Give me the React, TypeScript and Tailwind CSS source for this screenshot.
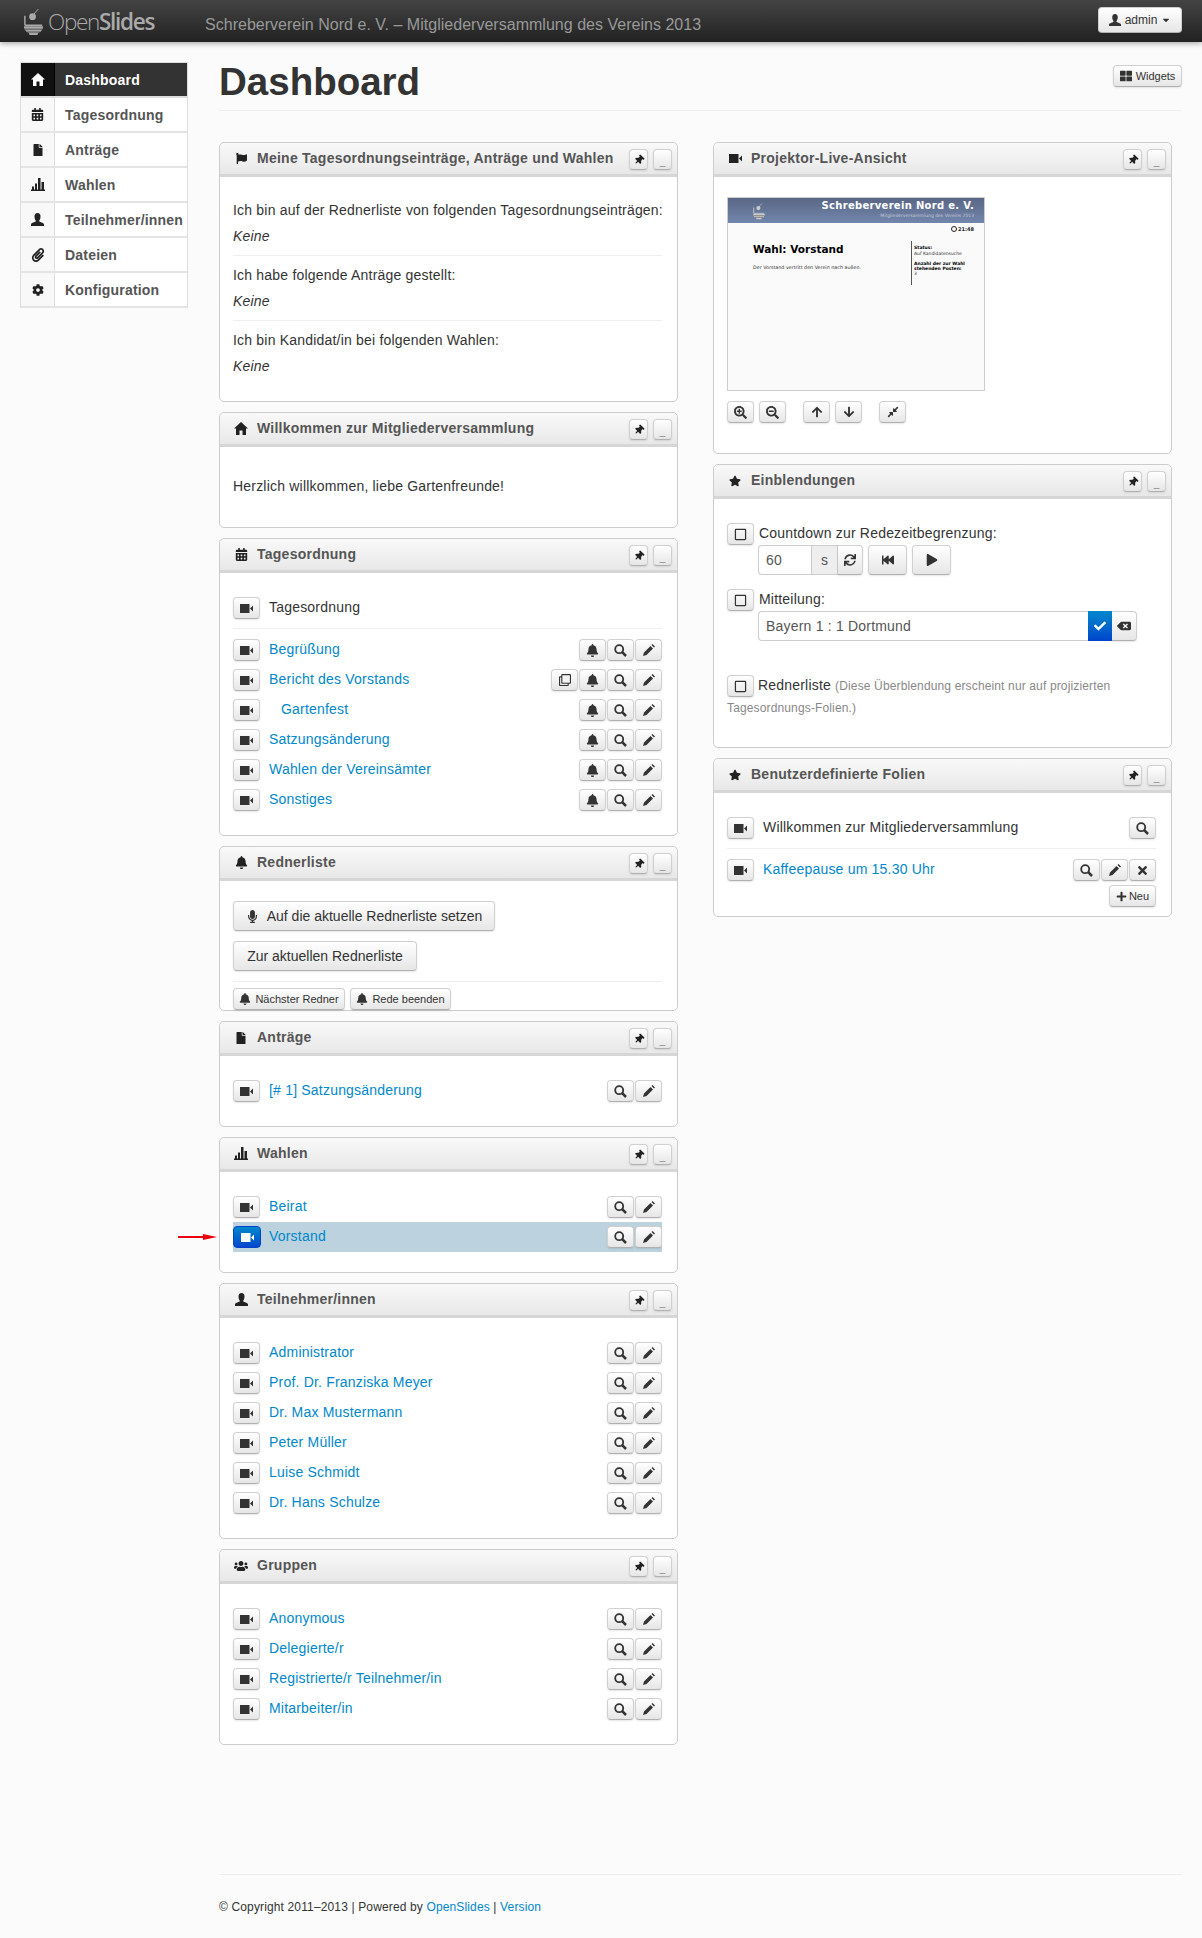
import type { ReactNode } from 'react'
import {
  FaArrowDown,
  FaArrowUp,
  FaBackspace,
  FaBell,
  FaCalendarAlt,
  FaCaretDown,
  FaCheck,
  FaCog,
  FaCompressAlt,
  FaFastBackward,
  FaFile,
  FaFlag,
  FaMicrophone,
  FaPaperclip,
  FaPlay,
  FaPlus,
  FaRegClone,
  FaRegSquare,
  FaSearchMinus,
  FaSearchPlus,
  FaStar,
  FaSync,
  FaThLarge,
  FaThumbtack,
  FaTimes,
  FaUsers,
} from 'react-icons/fa'

const btn =
  'inline-flex items-center justify-center rounded-[4px] border border-[#d0d0d0] border-b-[#b0b0b0] bg-linear-to-b from-white to-[#e6e6e6] text-[#333] tracking-[0px] shadow-[0_1px_2px_rgba(0,0,0,0.1)]'

function CamIcon({ className = 'text-[#333]' }: { className?: string }) {
  return (
    <svg viewBox="0 0 13 9" className={`h-[9px] w-[13px] ${className}`} fill="currentColor">
      <path d="M0 0h9.500v9H0zM10 4.500 13 1.500v6z" />
    </svg>
  )
}

function HomeIcon() {
  return (
    <svg viewBox="0 0 14 13" className="h-[13px] w-[14px]" fill="currentColor">
      <path d="M7 0 14 6.500h-2V13H8.500V8.500h-3V13H2V6.500H0Z" />
    </svg>
  )
}

function StatsIcon() {
  return (
    <svg viewBox="0 0 14 13" className="h-[13px] w-[14px]" fill="currentColor">
      <path d="M0 11.500h14V13H0zM1 8.500h2v3H1zM4 5.500h2v6H4zM7 0h2.500v11.500H7zM10.500 4h2.500v7.500h-2.500z" />
    </svg>
  )
}

function UserIcon({ size = 13 }: { size?: number }) {
  return (
    <svg viewBox="0 0 13 13" width={size} height={size} fill="currentColor">
      <path d="M6.500 0c2 0 3 1.500 3 3.500S8.700 7 8 8c0 1 5 1.500 5 3.500V13H0v-1.500C0 9.500 5 9 5 8c-.7-1-1.500-2.500-1.500-4.500S4.500 0 6.500 0Z" />
    </svg>
  )
}

function PencilIcon() {
  return (
    <svg viewBox="0 0 12 12" className="h-[12px] w-[12px]" fill="currentColor">
      <path d="M9.500 0 12 2.500l-1 1L8.500 1zM7.500 2 10 4.500 3.500 11 0 12l1-3.500z" />
    </svg>
  )
}

function SearchIcon() {
  return (
    <svg viewBox="0 0 13 13" className="h-[13px] w-[13px]" fill="none" stroke="currentColor">
      <circle cx="5.200" cy="5.200" r="4" strokeWidth="1.800" />
      <path d="M8.200 8.200 12 12" strokeWidth="2.500" />
    </svg>
  )
}

function IconBtn({ children }: { children: ReactNode }) {
  return <span className={`${btn} h-[22px] w-[27px] shrink-0`}>{children}</span>
}

function Logo({ className }: { className: string }) {
  return (
    <svg viewBox="0 0 24 30" className={className}>
      <path d="M11 9 17 2" stroke="currentColor" strokeWidth="1" fill="none" />
      <circle cx="11" cy="10" r="3.500" fill="currentColor" />
      <path d="M3 9v10M3 19h18" stroke="currentColor" strokeWidth="1.500" fill="none" />
      <path d="M2 20h20c0 3-2 6-5 7l-1 2H8l-1-2c-3-1-5-4-5-7Z" fill="currentColor" />
      <path d="M3 23h18M5 26h14" stroke="#333" strokeWidth="0.8" />
    </svg>
  )
}

function Widget({
  title,
  icon,
  children,
  bodyClass = 'pl-[13px] pr-[15px] py-[20px]',
}: {
  title: string
  icon: ReactNode
  children: ReactNode
  bodyClass?: string
}) {
  return (
    <section className="mb-[10px] rounded-[5px] border border-[#ccc] bg-white">
      <div className="flex h-[34px] items-center rounded-t-[5px] border-b-[3px] border-[#d6d6d6] bg-linear-to-b from-[#f9f9f9] to-[#e8e8e8] pl-[13px] pr-[5px]">
        <span className="flex w-[24px] justify-center pr-[8px] text-[#222]">{icon}</span>
        <h3 className="flex-1 pb-[1px] text-[14px] font-bold tracking-[0.25px] text-[#555]">{title}</h3>
        <span className={`${btn} mt-[2px] h-[21px] w-[19px]`}>
          <FaThumbtack size={10} className="rotate-45 text-[#222]" />
        </span>
        <span className={`${btn} ml-[5px] mt-[2px] h-[21px] w-[19px] items-end pb-[2px] text-[10px] leading-none text-[#888]`}>_</span>
      </div>
      <div className={bodyClass}>{children}</div>
    </section>
  )
}

const search = <SearchIcon />
const pencil = <PencilIcon />
const bell = <FaBell size={13} />

function Row({
  label,
  link = true,
  indent,
  actions,
  active,
}: {
  label: string
  link?: boolean
  indent?: boolean
  actions?: ReactNode[]
  active?: boolean
}) {
  return (
    <div className={`relative flex h-[30px] items-center ${active ? 'bg-[#bcd2de]' : ''}`}>
      {active ? (
        <span className="inline-flex h-[22px] w-[28px] items-center justify-center rounded-[4px] border border-[#0044cc] bg-linear-to-b from-[#0088cc] to-[#0044cc]">
          <CamIcon className="text-white" />
        </span>
      ) : (
        <IconBtn>
          <CamIcon />
        </IconBtn>
      )}
      <span
        className={`flex-1 pb-[2px] ${active ? 'pl-[8px]' : 'pl-[9px]'} ${indent ? 'ml-[12px]' : ''} ${
          link ? 'text-[#0088cc]' : 'text-[#333]'
        }`}
      >
        {label}
      </span>
      <span className="flex gap-[1px]">
        {actions?.map((a, i) => (
          <IconBtn key={i}>{a}</IconBtn>
        ))}
      </span>
      {active && (
        <svg viewBox="0 0 39 6" className="absolute left-[-55px] top-[12px] h-[6px] w-[39px]">
          <path d="M0 2h25V0l14 3-14 3V4H0Z" fill="#e8000d" />
        </svg>
      )}
    </div>
  )
}

function Overlay({ children }: { children: ReactNode }) {
  return (
    <div className="flex gap-[4px]">
      <IconBtn>
        <FaRegSquare size={13} />
      </IconBtn>
      <div className="flex-1">{children}</div>
    </div>
  )
}

const navItems = [
  { label: 'Dashboard', icon: <HomeIcon />, active: true },
  { label: 'Tagesordnung', icon: <FaCalendarAlt size={13} /> },
  { label: 'Anträge', icon: <FaFile size={12} /> },
  { label: 'Wahlen', icon: <StatsIcon /> },
  { label: 'Teilnehmer/innen', icon: <UserIcon /> },
  { label: 'Dateien', icon: <FaPaperclip size={14} /> },
  { label: 'Konfiguration', icon: <FaCog size={12} /> },
]

const agenda = ['Bericht des Vorstands', 'Gartenfest', 'Satzungsänderung', 'Wahlen der Vereinsämter', 'Sonstiges']
const people = ['Administrator', 'Prof. Dr. Franziska Meyer', 'Dr. Max Mustermann', 'Peter Müller', 'Luise Schmidt', 'Dr. Hans Schulze']
const groups = ['Anonymous', 'Delegierte/r', 'Registrierte/r Teilnehmer/in', 'Mitarbeiter/in']

function Projector() {
  return (
    <div className="h-[194px] w-[258px] overflow-hidden border border-[#ccc] bg-[#fafafa] tracking-[0px] [font-family:'DejaVu_Sans',sans-serif]">
      <div className="flex h-[25px] justify-between bg-linear-to-b from-[#5a6786] to-[#7286ac] pl-[24px] pr-[10px]">
        <Logo className="mt-[3px] h-[20px] w-[14px] text-[#ccc]" />
        <div className="text-right">
          <div className="text-[10px] font-bold leading-[15px] tracking-[0.3px] text-white">Schreberverein Nord e. V.</div>
          <div className="text-[4.500px] leading-[5px] text-[#c4cad8]">Mitgliederversammlung des Vereins 2013</div>
        </div>
      </div>
      <div className="flex items-center justify-end pr-[10px] pt-[2px] text-[5px] font-bold leading-[8px] text-[#222]">
        <span className="mr-[1px] inline-block h-[6px] w-[6px] rounded-full border border-[#222]" />
        21:48
      </div>
      <div className="flex pl-[25px] pr-[10px] pt-[8px]">
        <div className="w-[158px]">
          <div className="text-[10.500px] font-bold leading-[16px] text-black">Wahl: Vorstand</div>
          <div className="mt-[7px] text-[4.800px] leading-[7px] text-[#333]">Der Vorstand vertritt den Verein nach außen.</div>
        </div>
        <div className="h-[44px] flex-1 border-l border-[#555] pl-[2px] pt-[4px] text-[4.500px] leading-[5px] text-[#333]">
          <b className="block text-black">Status:</b>
          <div className="mt-[1px]">Auf Kandidatensuche</div>
          <b className="mt-[5px] block text-black">Anzahl der zur Wahl stehenden Posten:</b>
          <div>3</div>
        </div>
      </div>
    </div>
  )
}

export default function App() {
  return (
    <div className="min-h-[1938px] bg-[#fbfbfb] text-[14px] leading-[20px] tracking-[0.2px] text-[#333] [font-family:'Liberation_Sans',Arial,sans-serif]">
      <header className="flex h-[42px] items-center bg-linear-to-b from-[#444] to-[#222] pl-[22px] pr-[20px] shadow-[0_1px_6px_rgba(0,0,0,0.4)]">
        <Logo className="h-[29px] w-[23px] text-[#aaa]" />
        <span className="ml-[3px] w-[157px] pt-[2px] text-[22.500px] tracking-[-1.300px] text-[#aaa] [font-family:'Open_Sans',sans-serif]">
          <span className="font-light">Open</span>
          <span className="font-semibold">Slides</span>
        </span>
        <span className="flex-1 pt-[8px] text-[16px] tracking-[0.02px] text-[#999]">Schreberverein Nord e. V. – Mitgliederversammlung des Vereins 2013</span>
        <span className={`${btn} mb-[2px] h-[26px] w-[84px] gap-[4px] text-[12px]`}>
          <UserIcon size={12} />
          admin
          <FaCaretDown size={10} />
        </span>
      </header>

      <div className="flex gap-[31px] pl-[20px] pr-[20px] pt-[20px]">
        <nav className="h-fit w-[168px] shrink-0 border border-b-0 border-[#ddd] bg-white">
          {navItems.map((item) => (
            <div key={item.label} className={`flex h-[35px] items-center border-b-2 ${item.active ? 'border-[#ddd] bg-[#333]' : 'border-[#e4e4e4]'}`}>
              <span
                className={`flex h-full w-[34px] shrink-0 items-center justify-center border-r ${
                  item.active ? 'border-black bg-[#111] text-white' : 'border-[#ddd] bg-[#f8f8f8] text-[#222]'
                }`}
              >
                {item.icon}
              </span>
              <span className={`pl-[10px] pt-[1px] font-bold ${item.active ? 'text-white' : 'text-[#555]'}`}>{item.label}</span>
            </div>
          ))}
        </nav>

        <main className="min-w-0 flex-1">
          <div className="flex h-[49px] items-start justify-between border-b border-[#eee]">
            <h1 className="text-[38.500px] font-bold leading-[40px] tracking-[0px] text-[#333]">Dashboard</h1>
            <span className={`${btn} mt-[3px] h-[22px] w-[69px] gap-[4px] text-[11px]`}>
              <FaThLarge size={12} />
              Widgets
            </span>
          </div>

          <div className="mt-[31px] flex gap-[35px] pr-[10px]">
            <div className="w-[459px]">
              <Widget title="Meine Tagesordnungseinträge, Anträge und Wahlen" icon={<FaFlag size={11} />} bodyClass="pl-[13px] pr-[15px] pt-[23px] h-[224px]">
                <p className="whitespace-nowrap">Ich bin auf der Rednerliste von folgenden Tagesordnungseinträgen:</p>
                <p className="mt-[6px] italic">Keine</p>
                <hr className="mb-[9px] mt-[9px] border-[#eee]" />
                <p>Ich habe folgende Anträge gestellt:</p>
                <p className="mt-[6px] italic">Keine</p>
                <hr className="mb-[9px] mt-[9px] border-[#eee]" />
                <p>Ich bin Kandidat/in bei folgenden Wahlen:</p>
                <p className="mt-[6px] italic">Keine</p>
              </Widget>

              <Widget title="Willkommen zur Mitgliederversammlung" icon={<HomeIcon />} bodyClass="pl-[13px] pr-[15px] pt-[29px] h-[80px]">
                <p>Herzlich willkommen, liebe Gartenfreunde!</p>
              </Widget>

              <Widget title="Tagesordnung" icon={<FaCalendarAlt size={13} />}>
                <Row label="Tagesordnung" link={false} />
                <hr className="mb-[6px] mt-[5px] border-[#eee]" />
                <Row label="Begrüßung" actions={[bell, search, pencil]} />
                {agenda.map((a, i) => (
                  <Row
                    key={a}
                    label={a}
                    indent={a === 'Gartenfest'}
                    actions={i === 0 ? [<FaRegClone size={12} />, bell, search, pencil] : [bell, search, pencil]}
                  />
                ))}
              </Widget>

              <Widget title="Rednerliste" icon={<FaBell size={13} />} bodyClass="pl-[13px] pr-[15px] pt-[20px] h-[129px]">
                <div className={`${btn} h-[30px] w-[262px] gap-[8px] tracking-[0.3px]`}>
                  <FaMicrophone size={13} />
                  Auf die aktuelle Rednerliste setzen
                </div>
                <div className="mt-[10px]">
                  <span className={`${btn} h-[30px] w-[184px] tracking-[0.3px]`}>Zur aktuellen Rednerliste</span>
                </div>
                <hr className="mt-[10px] border-[#eee]" />
                <div className="mt-[6px] flex gap-[5px] text-[11px]">
                  <span className={`${btn} h-[22px] w-[112px] gap-[4px]`}>
                    <FaBell size={12} />
                    Nächster Redner
                  </span>
                  <span className={`${btn} h-[22px] w-[101px] gap-[4px]`}>
                    <FaBell size={12} />
                    Rede beenden
                  </span>
                </div>
              </Widget>

              <Widget title="Anträge" icon={<FaFile size={12} />}>
                <Row label="[# 1] Satzungsänderung" actions={[search, pencil]} />
              </Widget>

              <Widget title="Wahlen" icon={<StatsIcon />}>
                <Row label="Beirat" actions={[search, pencil]} />
                <Row label="Vorstand" actions={[search, pencil]} active />
              </Widget>

              <Widget title="Teilnehmer/innen" icon={<UserIcon />}>
                {people.map((p) => (
                  <Row key={p} label={p} actions={[search, pencil]} />
                ))}
              </Widget>

              <Widget title="Gruppen" icon={<FaUsers size={14} />}>
                {groups.map((g) => (
                  <Row key={g} label={g} actions={[search, pencil]} />
                ))}
              </Widget>
            </div>

            <div className="w-[459px]">
              <Widget title="Projektor-Live-Ansicht" icon={<CamIcon className="text-[#222]" />} bodyClass="pl-[13px] pr-[15px] pt-[20px] h-[276px]">
                <Projector />
                <div className="mt-[10px] flex">
                  <IconBtn>
                    <FaSearchPlus size={13} />
                  </IconBtn>
                  <span className="ml-[5px]">
                    <IconBtn>
                      <FaSearchMinus size={13} />
                    </IconBtn>
                  </span>
                  <span className="ml-[17px]">
                    <IconBtn>
                      <FaArrowUp size={12} />
                    </IconBtn>
                  </span>
                  <span className="ml-[5px]">
                    <IconBtn>
                      <FaArrowDown size={12} />
                    </IconBtn>
                  </span>
                  <span className="ml-[17px]">
                    <IconBtn>
                      <FaCompressAlt size={12} />
                    </IconBtn>
                  </span>
                </div>
              </Widget>

              <Widget title="Einblendungen" icon={<FaStar size={12} />} bodyClass="pl-[13px] pr-[15px] pt-[24px] h-[248px]">
                <Overlay>
                  <div className="h-[22px] pl-[1px] leading-[20px]">Countdown zur Redezeitbegrenzung:</div>
                  <div className="flex h-[30px]">
                    <span className="flex w-[53px] items-center rounded-l-[4px] border border-r-0 border-[#ccc] pl-[7px] text-[#555]">60</span>
                    <span className="flex w-[27px] items-center justify-center border border-[#ccc] bg-[#eee] text-[#555]">s</span>
                    <span className={`${btn} w-[25px] rounded-l-none border-l-0`}>
                      <FaSync size={12} />
                    </span>
                    <span className={`${btn} ml-[5px] w-[39px]`}>
                      <FaFastBackward size={12} />
                    </span>
                    <span className={`${btn} ml-[5px] w-[39px]`}>
                      <FaPlay size={12} />
                    </span>
                  </div>
                </Overlay>
                <div className="mt-[14px]">
                  <Overlay>
                    <div className="h-[22px] pl-[1px] leading-[20px]">Mitteilung:</div>
                    <div className="flex h-[30px] w-[379px]">
                      <span className="flex flex-1 items-center rounded-l-[4px] border border-r-0 border-[#ccc] pl-[7px] text-[#555]">Bayern 1 : 1 Dortmund</span>
                      <span className="flex w-[24px] items-center justify-center bg-linear-to-b from-[#0088cc] to-[#0044cc] text-white">
                        <FaCheck size={12} />
                      </span>
                      <span className={`${btn} w-[25px] rounded-l-none border-l-0`}>
                        <FaBackspace size={14} />
                      </span>
                    </div>
                  </Overlay>
                </div>
                <div className="mt-[34px] leading-[21px]">
                  <span className="mr-[4px] inline-flex align-top">
                    <IconBtn>
                      <FaRegSquare size={13} />
                    </IconBtn>
                  </span>
                  Rednerliste <span className="text-[12px] tracking-[0.14px] text-[#888]">(Diese Überblendung erscheint nur auf projizierten Tagesordnungs-Folien.)</span>
                </div>
              </Widget>

              <Widget title="Benutzerdefinierte Folien" icon={<FaStar size={12} />} bodyClass="pl-[13px] pr-[15px] pt-[20px] h-[123px]">
                <Row label="Willkommen zur Mitgliederversammlung" link={false} actions={[search]} />
                <hr className="mb-[6px] mt-[5px] border-[#eee]" />
                <Row label="Kaffeepause um 15.30 Uhr" actions={[search, pencil, <FaTimes size={13} />]} />
                <div className="flex justify-end">
                  <span className={`${btn} h-[22px] w-[47px] gap-[2px] text-[11px]`}>
                    <FaPlus size={11} />
                    Neu
                  </span>
                </div>
              </Widget>
            </div>
          </div>

          <footer className="mt-[119px] border-t border-[#eee] pt-[23px] text-[12px] leading-[18px] tracking-[0.14px]">
            © Copyright 2011–2013 | Powered by <span className="text-[#0088cc]">OpenSlides</span> | <span className="text-[#0088cc]">Version</span>
          </footer>
        </main>
      </div>
    </div>
  )
}
